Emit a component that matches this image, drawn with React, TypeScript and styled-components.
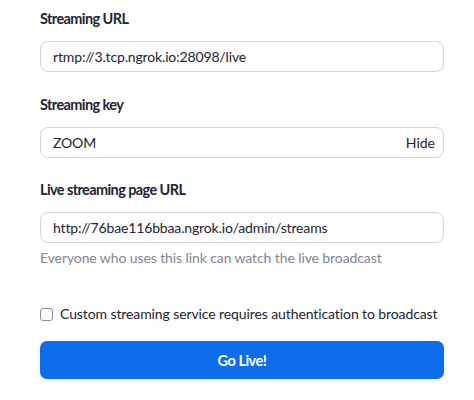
import React, { useState } from 'react';
import styled, { createGlobalStyle } from 'styled-components';

const GlobalStyle = createGlobalStyle`
  body {
    margin: 0;
    background: #ffffff;
    font-family: Lato, "Open Sans", Arial, sans-serif;
    color: #232333;
  }
`;

const Form = styled.div`
  width: 404px;
  padding: 9px 30px 20px 40px;
  display: flex;
  flex-direction: column;
`;

const Field = styled.div<{ $gap?: number }>`
  display: flex;
  flex-direction: column;
  margin-bottom: ${({ $gap }) => $gap ?? 23}px;
`;

const Label = styled.label`
  font-size: 14.5px;
  line-height: 20px;
  font-weight: 700;
  letter-spacing: -0.6px;
  color: #232333;
  margin-bottom: 12px;
`;

const InputBox = styled.div`
  height: 31px;
  box-sizing: border-box;
  border: 1px solid #d4d4d8;
  border-radius: 8px;
  display: flex;
  align-items: center;
  padding: 0 8px 0 12px;
  background: #fff;
`;

const TextInput = styled.input`
  flex: 1;
  min-width: 0;
  border: none;
  outline: none;
  padding: 0;
  background: transparent;
  font-family: inherit;
  font-size: 14px;
  letter-spacing: -0.15px;
  color: #232333;
`;

const ToggleLink = styled.button`
  border: none;
  background: none;
  padding: 0;
  font-family: inherit;
  font-size: 14px;
  color: #232333;
  cursor: pointer;
`;

const Helper = styled.div`
  font-size: 14px;
  line-height: 20px;
  letter-spacing: -0.1px;
  color: #858594;
  margin-top: 5px;
`;

const CheckRow = styled.label`
  display: flex;
  align-items: center;
  gap: 7px;
  font-size: 14px;
  line-height: 20px;
  letter-spacing: -0.1px;
  white-space: nowrap;
  color: #232333;
  margin-top: 36px;
  margin-bottom: 17px;
  cursor: pointer;
`;

const Box = styled.input`
  appearance: none;
  width: 13px;
  height: 13px;
  margin: 0;
  border: 1px solid #8e8e98;
  border-radius: 3px;
  background: #fff;
  flex-shrink: 0;

  &:checked {
    background: #0e71eb;
    border-color: #0e71eb;
  }
`;

const GoButton = styled.button`
  height: 38px;
  border: none;
  border-radius: 7px;
  background: #0e6deb;
  color: #fff;
  font-family: inherit;
  font-size: 14.5px;
  font-weight: 700;
  letter-spacing: -0.5px;
  cursor: pointer;
`;

export default function App() {
  const [hidden, setHidden] = useState(false);
  const [auth, setAuth] = useState(false);

  return (
    <>
      <GlobalStyle />
      <Form>
        <Field>
          <Label>Streaming URL</Label>
          <InputBox>
            <TextInput defaultValue="rtmp://3.tcp.ngrok.io:28098/live" />
          </InputBox>
        </Field>
        <Field $gap={22}>
          <Label>Streaming key</Label>
          <InputBox>
            <TextInput type={hidden ? 'password' : 'text'} defaultValue="ZOOM" />
            <ToggleLink onClick={() => setHidden(!hidden)}>{hidden ? 'Show' : 'Hide'}</ToggleLink>
          </InputBox>
        </Field>
        <Field $gap={0}>
          <Label>Live streaming page URL</Label>
          <InputBox>
            <TextInput defaultValue="http://76bae116bbaa.ngrok.io/admin/streams" />
          </InputBox>
          <Helper>Everyone who uses this link can watch the live broadcast</Helper>
        </Field>
        <CheckRow>
          <Box type="checkbox" checked={auth} onChange={() => setAuth(!auth)} />
          Custom streaming service requires authentication to broadcast
        </CheckRow>
        <GoButton>Go Live!</GoButton>
      </Form>
    </>
  );
}
